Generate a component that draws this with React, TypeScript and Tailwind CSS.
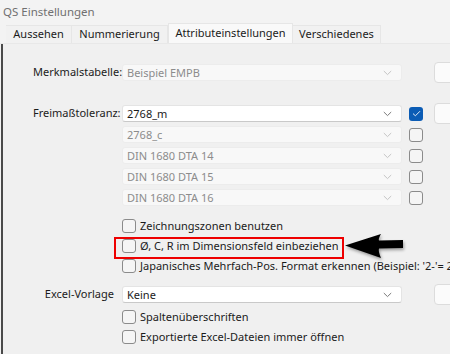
import React from "react";

const font = { fontFamily: '"Noto Sans", "Open Sans", sans-serif' };

function Chevron({ disabled }: { disabled?: boolean }) {
  return (
    <svg width="9" height="6" viewBox="0 0 9 6" className="shrink-0">
      <path d="M0.8 1 L4.5 4.6 L8.2 1" fill="none" stroke={disabled ? "#c4c4c4" : "#7a7a7a"} strokeWidth="1" />
    </svg>
  );
}

function Combo({ text, disabled }: { text: string; disabled?: boolean }) {
  return (
    <div
      className={
        "w-[280px] h-[17px] shrink-0 rounded-[3px] flex items-center justify-between pl-[4px] pr-[9px] text-[11px] " +
        (disabled
          ? "bg-[#f8f8f8] border border-[#ececec] text-[#8c8c8c]"
          : "bg-white border border-[#e4e4e4] border-b-[#c9c9c9] text-[#1b1b1b]")
      }
    >
      <span className="leading-none">{text}</span>
      <Chevron disabled={disabled} />
    </div>
  );
}

function Check({ checked }: { checked?: boolean }) {
  if (checked)
    return (
      <div className="w-[14px] h-[14px] shrink-0 rounded-[3px] bg-[#0b5cb5] flex items-center justify-center">
        <svg width="9" height="7" viewBox="0 0 9 7">
          <path d="M1 3.6 L3.4 5.8 L8 1.2" fill="none" stroke="#dfe9f6" strokeWidth="1" />
        </svg>
      </div>
    );
  return <div className="w-[14px] h-[14px] shrink-0 rounded-[3px] border border-[#8b8b8b] bg-[#f5f5f5]" />;
}

function SideBox() {
  return <div className="w-[50px] h-[21px] shrink-0 rounded-[4px] border border-[#dcdcdc] bg-[#fbfbfb]" />;
}

function ComboRow({
  label,
  labelRight,
  text,
  disabled,
  check,
  side,
}: {
  label?: string;
  labelRight?: boolean;
  text: string;
  disabled?: boolean;
  check?: "on" | "off" | "none";
  side?: boolean;
}) {
  return (
    <div className="h-[21px] flex items-center">
      <div
        className={
          "w-[115px] shrink-0 whitespace-nowrap text-[11px] text-[#1b1b1b] " +
          (labelRight ? "text-right pr-[4px]" : "pl-[30px]")
        }
      >
        {label}
      </div>
      <div className="ml-[4px]">
        <Combo text={text} disabled={disabled} />
      </div>
      <div className="ml-[7px] w-[14px] shrink-0">
        {check === "on" ? <Check checked /> : check === "off" ? <Check /> : null}
      </div>
      <div className="ml-[11px]">{side ? <SideBox /> : null}</div>
    </div>
  );
}

function CheckRow({ text }: { text: string }) {
  return (
    <div className="h-[20px] flex items-center pl-[119px] whitespace-nowrap">
      <Check />
      <span className="ml-[4px] text-[11px] text-[#1b1b1b]">{text}</span>
    </div>
  );
}

export default function App() {
  const tabs = [
    { t: "Aussehen", w: "w-[66px]" },
    { t: "Nummerierung", w: "w-[96px]" },
    { t: "Attributeinstellungen", w: "w-[125px]", active: true },
    { t: "Verschiedenes", w: "w-[88px]" },
  ];
  return (
    <div className="w-[450px] h-[354px] overflow-hidden bg-[#f3f3f3] flex flex-col relative" style={font}>
      <div className="h-[24px] shrink-0 flex items-center pl-[3px] text-[11.5px] text-[#707070]">QS Einstellungen</div>
      <div className="h-[20px] shrink-0 flex items-end pl-[6px] border-b border-[#e8e8e8]">
        {tabs.map((tb) => (
          <div
            key={tb.t}
            className={
              tb.w +
              " shrink-0 flex items-center justify-center text-[11px] text-[#1b1b1b] border-t border-r border-[#e6e6e6] " +
              (tb.active ? "h-[20px] bg-[#f9f9f9] border-l" : "h-[18px] bg-[#f1f1f1]")
            }
          >
            {tb.t}
          </div>
        ))}
      </div>
      <div className="flex-1 bg-[#f0f0f0] border-l-2 border-[#4a4a4a] ml-[1px] flex flex-col pt-[18px]">
        <ComboRow label="Merkmalstabelle:" text="Beispiel EMPB" disabled check="none" side />
        <div className="h-[20px]" />
        <ComboRow label="Freimaßtoleranz:" text="2768_m" check="on" side />
        <ComboRow text="2768_c" disabled check="off" />
        <ComboRow text="DIN 1680 DTA 14" disabled check="off" />
        <ComboRow text="DIN 1680 DTA 15" disabled check="off" />
        <ComboRow text="DIN 1680 DTA 16" disabled check="off" />
        <div className="h-[8px]" />
        <CheckRow text="Zeichnungszonen benutzen" />
        <CheckRow text="Ø, C, R im Dimensionsfeld einbeziehen" />
        <CheckRow text="Japanisches Mehrfach-Pos. Format erkennen (Beispiel: '2-'= 2 Merkmale)" />
        <div className="h-[8px]" />
        <ComboRow label="Excel-Vorlage" labelRight text="Keine" check="none" side />
        <div className="h-[2px]" />
        <CheckRow text="Spaltenüberschriften" />
        <CheckRow text="Exportierte Excel-Dateien immer öffnen" />
      </div>

      {/* annotation: red highlight box */}
      <div className="absolute left-[114px] top-[237px] w-[230px] h-[22px] border-2 border-[#ee0000] pointer-events-none" />
      {/* annotation: arrow */}
      <svg
        className="absolute left-[338px] top-[228px]"
        width="72"
        height="36"
        viewBox="0 0 72 36"
        style={{ filter: "drop-shadow(1px 2px 1.5px rgba(0,0,0,0.35))" }}
      >
        <path d="M7 17.5 L43 6 Q40 11 41 12.5 L65 12 L65 20 L41 20.5 Q40 23 43 30 Z" fill="#000" />
      </svg>
    </div>
  );
}
